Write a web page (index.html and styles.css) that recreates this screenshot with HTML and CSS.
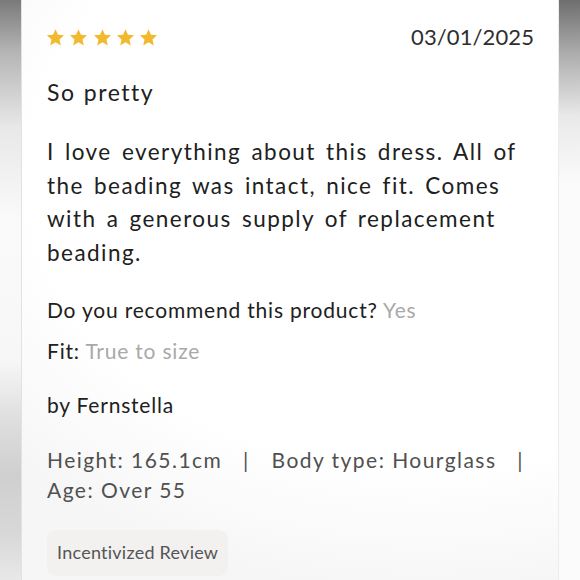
FILE: index.html
```html
<!DOCTYPE html>
<html>
<head>
<meta charset="utf-8">
<link rel="stylesheet" href="styles.css">
</head>
<body>
<div class="frame">
  <div class="edge edge-left"></div>
  <main class="card">
    <div class="top">
      <div class="stars">
        <svg class="star" viewBox="0 0 24 24"><path d="M12 1.5l3.1 7.1 7.7.7-5.8 5.1 1.7 7.6L12 18l-6.7 4 1.7-7.6-5.8-5.1 7.7-.7z"/></svg>
        <svg class="star" viewBox="0 0 24 24"><path d="M12 1.5l3.1 7.1 7.7.7-5.8 5.1 1.7 7.6L12 18l-6.7 4 1.7-7.6-5.8-5.1 7.7-.7z"/></svg>
        <svg class="star" viewBox="0 0 24 24"><path d="M12 1.5l3.1 7.1 7.7.7-5.8 5.1 1.7 7.6L12 18l-6.7 4 1.7-7.6-5.8-5.1 7.7-.7z"/></svg>
        <svg class="star" viewBox="0 0 24 24"><path d="M12 1.5l3.1 7.1 7.7.7-5.8 5.1 1.7 7.6L12 18l-6.7 4 1.7-7.6-5.8-5.1 7.7-.7z"/></svg>
        <svg class="star" viewBox="0 0 24 24"><path d="M12 1.5l3.1 7.1 7.7.7-5.8 5.1 1.7 7.6L12 18l-6.7 4 1.7-7.6-5.8-5.1 7.7-.7z"/></svg>
      </div>
      <div class="date">03/01/2025</div>
    </div>
    <h2 class="title">So pretty</h2>
    <p class="body">I love everything about this dress. All of the beading was intact, nice fit. Comes with a generous supply of replacement beading.</p>
    <p class="meta">Do you recommend this product? <span class="muted">Yes</span></p>
    <p class="meta fit">Fit: <span class="muted">True to size</span></p>
    <p class="meta author">by Fernstella</p>
    <p class="stats">Height: 165.1cm <span class="sep">| </span>Body type: Hourglass <span class="sep">| </span>Age: Over 55</p>
    <div class="badge">Incentivized Review</div>
  </main>
  <div class="edge edge-right"></div>
</div>
</body>
</html>
```
FILE: styles.css
```css
html, body {
  margin: 0;
  padding: 0;
  width: 580px;
  height: 580px;
  overflow: hidden;
  background: #fff;
}
.frame {
  display: flex;
  width: 580px;
  height: 580px;
}
.edge {
  flex: none;
  height: 580px;
}
.edge-left {
  width: 21px;
  background: linear-gradient(to bottom, #7a7a7a 0%, #b5b5b5 9%, #e8e8e8 22%, #fafafa 38%, #f7f7f7 62%, #e0dfdf 72%, #cfcfcf 82%, #d8d8d8 92%, #e8e8e8 100%);
  border-right: 1px solid #e2e2e2;
}
.edge-right {
  width: 21px;
  background: linear-gradient(to bottom, #6e6e6e 0%, #ababab 9%, #e9e9e9 20%, #fbfbfb 32%, #fbfbfb 100%);
  border-left: 1px solid #ececec;
}
.card {
  flex: 1;
  padding: 24px 24px 0 25px;
  font-family: Lato, "Open Sans", sans-serif;
  color: #202020;
  background: radial-gradient(ellipse 560px 420px at 75% 30%, #ffffff 70%, #f6f6f6 100%);
}
.top {
  display: flex;
  justify-content: space-between;
  align-items: center;
  height: 26px;
}
.stars {
  display: flex;
  gap: 4.3px;
  margin-left: -1px;
}
.star {
  width: 19px;
  height: 19px;
  fill: #f1b92e;
}
.date {
  font-size: 22px;
  line-height: 26px;
  letter-spacing: 0.1px;
  color: #2e2e2e;
}
.title {
  margin: 27px 0 0;
  font-size: 23px;
  font-weight: 400;
  line-height: 30px;
  letter-spacing: 1.5px;
  word-spacing: 1px;
}
.body {
  margin: 28px 0 0;
  max-width: 480px;
  font-size: 22.5px;
  line-height: 33.5px;
  letter-spacing: 1.45px;
  word-spacing: 3px;
}
.meta {
  margin: 27.5px 0 0;
  font-size: 21px;
  line-height: 26px;
  letter-spacing: 0.8px;
}
.meta.fit {
  margin-top: 15.3px;
}
.meta.author {
  margin-top: 28px;
}
.muted {
  color: #a9a9a9;
}
.stats {
  margin: 27.7px 0 0;
  max-width: 484px;
  font-size: 21px;
  line-height: 29.5px;
  letter-spacing: 1.45px;
  color: #505050;
}
.sep {
  margin-left: 14px;
  word-spacing: 15px;
}
.badge {
  display: inline-block;
  margin-top: 26px;
  padding: 11px 10px 13px 10px;
  background: #f2f1ef;
  border-radius: 9px;
  font-size: 18px;
  line-height: 22px;
  color: #555;
  letter-spacing: 0.25px;
}
```
